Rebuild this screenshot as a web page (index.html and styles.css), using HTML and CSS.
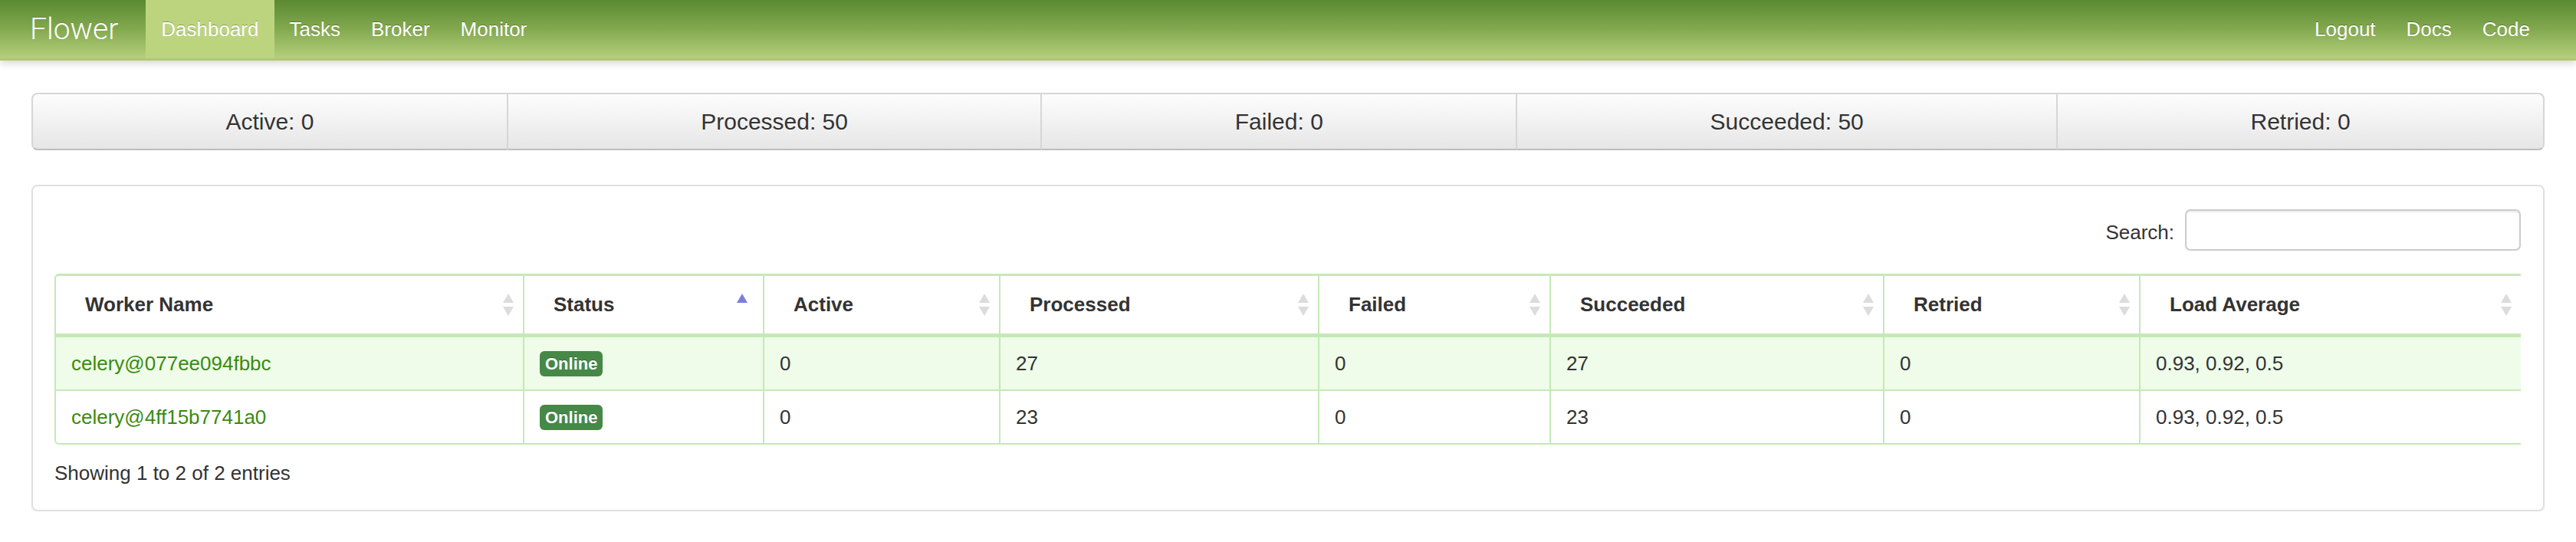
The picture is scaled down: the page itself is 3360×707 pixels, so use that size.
FILE: index.html
```html
<!DOCTYPE html>
<html lang="en">
<head>
<meta charset="utf-8">
<title>Flower</title>
<link rel="stylesheet" href="styles.css">
</head>
<body>
<header class="navbar">
  <a class="brand" href="#">Flower</a>
  <ul class="nav">
    <li class="active"><a href="#">Dashboard</a></li>
    <li><a href="#">Tasks</a></li>
    <li><a href="#">Broker</a></li>
    <li><a href="#">Monitor</a></li>
  </ul>
  <ul class="nav nav-right">
    <li><a href="#">Logout</a></li>
    <li><a href="#">Docs</a></li>
    <li><a href="#">Code</a></li>
  </ul>
</header>

<main class="container">
  <div class="stats">
    <div class="stat">Active: 0</div>
    <div class="stat">Processed: 50</div>
    <div class="stat">Failed: 0</div>
    <div class="stat">Succeeded: 50</div>
    <div class="stat">Retried: 0</div>
  </div>

  <section class="panel">
    <div class="toolbar">
      <label class="search-label" for="search">Search:</label>
      <input class="search-input" id="search" type="search">
    </div>
    <table class="workers">
      <colgroup>
        <col class="c-name"><col class="c-status"><col class="c-active"><col class="c-processed">
        <col class="c-failed"><col class="c-succeeded"><col class="c-retried"><col class="c-load">
      </colgroup>
      <thead>
        <tr>
          <th class="sort-both">Worker Name</th>
          <th class="sort-asc">Status</th>
          <th class="sort-both">Active</th>
          <th class="sort-both">Processed</th>
          <th class="sort-both">Failed</th>
          <th class="sort-both">Succeeded</th>
          <th class="sort-both">Retried</th>
          <th class="sort-both">Load Average</th>
        </tr>
      </thead>
      <tbody>
        <tr class="odd">
          <td><a class="worker-link" href="#">celery@077ee094fbbc</a></td>
          <td><span class="badge">Online</span></td>
          <td>0</td>
          <td>27</td>
          <td>0</td>
          <td>27</td>
          <td>0</td>
          <td>0.93, 0.92, 0.5</td>
        </tr>
        <tr class="even">
          <td><a class="worker-link" href="#">celery@4ff15b7741a0</a></td>
          <td><span class="badge">Online</span></td>
          <td>0</td>
          <td>23</td>
          <td>0</td>
          <td>23</td>
          <td>0</td>
          <td>0.93, 0.92, 0.5</td>
        </tr>
      </tbody>
    </table>
    <div class="info">Showing 1 to 2 of 2 entries</div>
  </section>
</main>
</body>
</html>
```

FILE: styles.css
```css
* { box-sizing: border-box; }

body {
  margin: 0;
  font-family: "Liberation Sans", Arial, Helvetica, sans-serif;
  font-size: 26px;
  color: #333;
  background: #fff;
}

/* ---------- navbar ---------- */
.navbar {
  display: flex;
  align-items: stretch;
  height: 79px;
  padding: 0 40px 0 19px;
  background: linear-gradient(to bottom, #5a8a33 0%, #83a94f 50%, #b5cf7b 100%);
  border-bottom: 3px solid #afc874;
  box-shadow: 0 3px 10px rgba(0, 0, 0, 0.18);
}

.brand {
  display: flex;
  align-items: center;
  padding: 0 20px;
  margin-right: 16px;
  font-family: Roboto, "Liberation Sans", sans-serif;
  font-weight: 300;
  font-size: 39px;
  color: #fff;
  text-decoration: none;
  text-shadow: 0 -1px 0 rgba(0, 0, 0, 0.15);
}

.nav {
  display: flex;
  list-style: none;
  margin: 0;
  padding: 0;
}

.nav li { display: flex; }

.nav a {
  display: flex;
  align-items: center;
  padding: 0 20px;
  color: #fff;
  text-decoration: none;
  text-shadow: 0 -1px 0 rgba(0, 0, 0, 0.3);
}

.nav .active a { background: #bdd47f; }

.nav-right { margin-left: auto; }

/* ---------- layout ---------- */
.container { padding: 0 41px; }

/* ---------- stats ---------- */
.stats {
  display: flex;
  height: 75px;
  margin-top: 42px;
}

.stat {
  flex: 1 1 auto;
  display: flex;
  align-items: center;
  justify-content: center;
  font-size: 30px;
  color: #333;
  background: linear-gradient(to bottom, #fdfdfd, #e6e6e6);
  border: 2px solid #d6d6d6;
  border-bottom-color: #bdbdbd;
  border-left-width: 0;
  text-shadow: 0 1px 1px rgba(255, 255, 255, 0.75);
}

.stat:first-child {
  border-left-width: 2px;
  border-radius: 8px 0 0 8px;
}

.stat:last-child { border-radius: 0 8px 8px 0; }

/* ---------- panel ---------- */
.panel {
  margin-top: 45px;
  border: 2px solid #e0e0e0;
  border-radius: 8px;
  padding: 30px 29px 30px 28px;
  box-shadow: 0 2px 3px rgba(0, 0, 0, 0.05);
}

.toolbar {
  display: flex;
  justify-content: flex-end;
  align-items: center;
  gap: 14px;
}

.search-label {
  color: #333;
  padding-top: 7px;
}

.search-input {
  width: 438px;
  height: 54px;
  border: 2px solid #cccccc;
  border-radius: 7px;
  box-shadow: inset 0 2px 2px rgba(0, 0, 0, 0.075);
  background: #fff;
  font: inherit;
}

/* ---------- table ---------- */
.workers {
  width: 100%;
  margin-top: 30px;
  table-layout: fixed;
  border-collapse: separate;
  border-spacing: 0;
}

.c-name { width: 613px; }
.c-status { width: 313px; }
.c-active { width: 308px; }
.c-processed { width: 416px; }
.c-failed { width: 302px; }
.c-succeeded { width: 435px; }
.c-retried { width: 334px; }

.workers th {
  height: 83px;
  padding: 0 38px;
  text-align: left;
  font-weight: bold;
  color: #333;
  border-top: 3px solid #c5e9b6;
  border-bottom: 5px solid #c5e9b6;
  border-right: 2px solid #c5e9b6;
  background-repeat: no-repeat;
  background-color: #fff;
}

.workers th:first-child {
  border-left: 2px solid #c5e9b6;
  border-top-left-radius: 6px;
}

.workers th:last-child { border-right: 0; }

.sort-both {
  background-image: url("data:image/svg+xml;utf8,<svg xmlns='http://www.w3.org/2000/svg' width='14' height='30' viewBox='0 0 14 30'><polygon points='7,0 14,12 0,12' fill='%23dcdcdc'/><polygon points='0,17 14,17 7,29' fill='%23dcdcdc'/></svg>");
  background-position: right 12px center;
}

.sort-asc {
  background-image: url("data:image/svg+xml;utf8,<svg xmlns='http://www.w3.org/2000/svg' width='14' height='30' viewBox='0 0 14 30'><polygon points='7,0 14,12 0,12' fill='%237a7fdc'/></svg>");
  background-position: right 20px center;
}

.workers td {
  height: 70px;
  padding: 0 20px;
  vertical-align: middle;
  white-space: nowrap;
  border-bottom: 2px solid #c5e9b6;
  border-right: 2px solid #c5e9b6;
}

.workers td:first-child { border-left: 2px solid #c5e9b6; }
.workers td:last-child { border-right: 0; }

.workers tr.even td:first-child { border-bottom-left-radius: 6px; }

.workers tr.odd td { background: #eefce9; }
.workers tr.even td { background: #fff; }

.worker-link {
  color: #3b8a10;
  text-decoration: none;
}

.badge {
  display: inline-block;
  height: 33px;
  line-height: 33px;
  padding: 0 7px;
  font-size: 22px;
  font-weight: bold;
  color: #fff;
  background: #468847;
  border-radius: 6px;
  text-shadow: 0 -1px 0 rgba(0, 0, 0, 0.25);
  vertical-align: middle;
}

.info {
  margin-top: 19px;
  line-height: 36px;
  color: #333;
}
```
